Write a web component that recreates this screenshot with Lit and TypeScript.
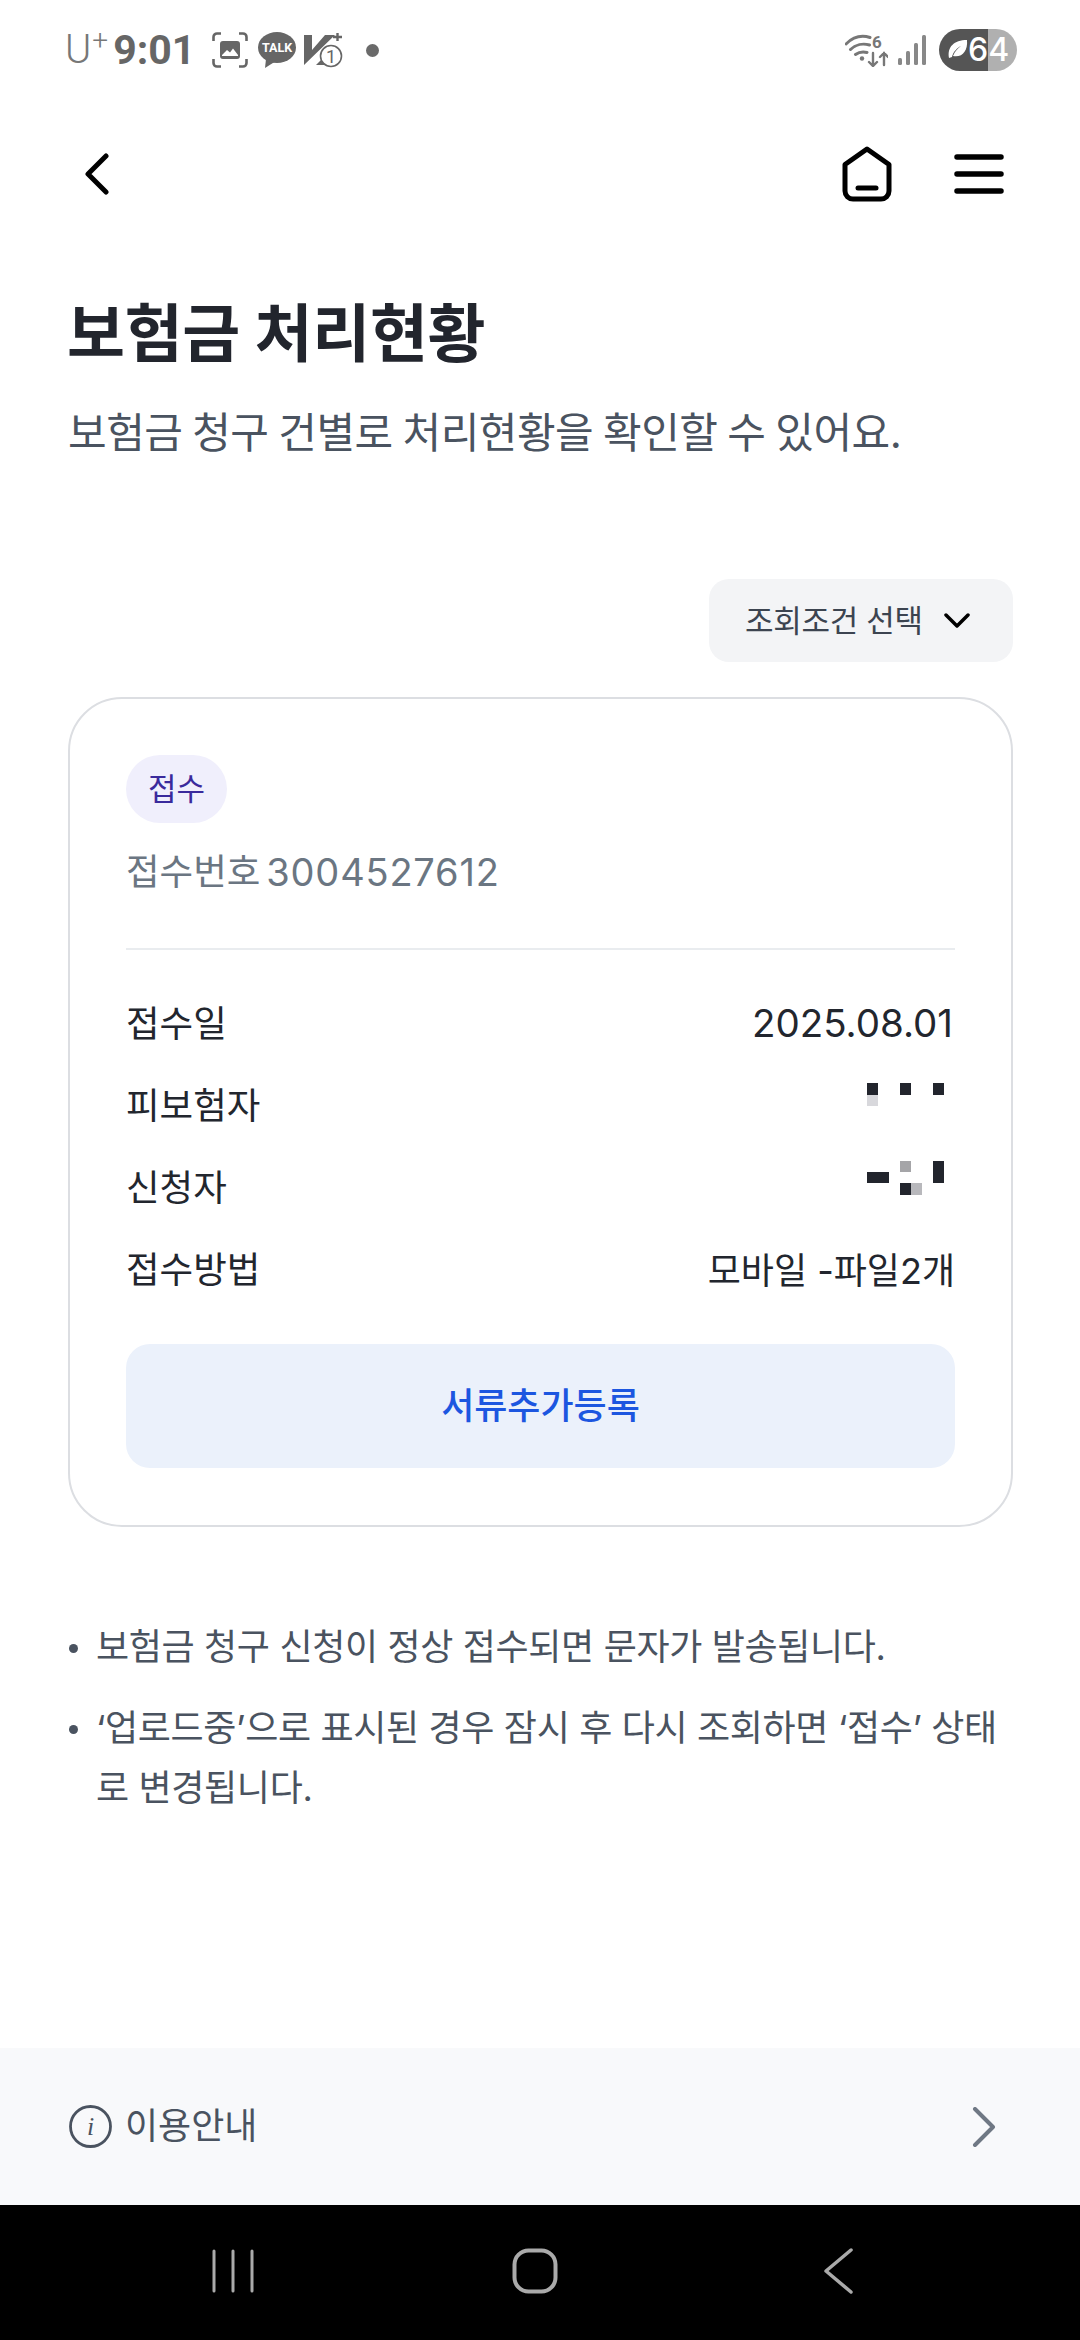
import { LitElement, html, css, svg } from "lit";
import { customElement } from "lit/decorators.js";

// mosaic blocks that hide personal names
const maskInsured = svg`
    <rect x="0" y="19" width="11" height="12" fill="#22252d" />
    <rect x="0" y="31" width="11" height="11" fill="#d8d8dc" />
    <rect x="33" y="19" width="11" height="12" fill="#22252d" />
    <rect x="66" y="19" width="11" height="12" fill="#22252d" />
`;
const maskApplicant = svg`
    <rect x="0" y="26" width="22" height="11" fill="#22252d" />
    <rect x="33" y="15" width="11" height="11" fill="#a5a5a8" />
    <rect x="33" y="37" width="11" height="12" fill="#22252d" />
    <rect x="44" y="37" width="11" height="12" fill="#b8b8bc" />
    <rect x="66" y="15" width="11" height="22" fill="#22252d" />
`;

@customElement("app-root")
export class AppRoot extends LitElement {
    static override styles = css`
        :host {
            display: flex;
            flex-direction: column;
            width: 1080px;
            height: 2340px;
            background: #fff;
            font-family: Inter, "Noto Sans CJK KR", sans-serif;
            color: #22252d;
            overflow: hidden;
        }

        svg {
            display: block;
            flex: none;
        }

        .status {
            height: 100px;
            flex: none;
            display: flex;
            align-items: center;
            justify-content: space-between;
            padding: 0 63px 0 65px;
            color: #666;
            font-family: Roboto, sans-serif;
        }
        .status-left,
        .status-right {
            display: flex;
            align-items: center;
        }
        .carrier {
            font-size: 40px;
            font-weight: 300;
            line-height: 40px;
            color: #777;
        }
        .carrier sup {
            font-size: 28px;
            line-height: 0;
            vertical-align: 13px;
            margin-left: 1px;
        }
        .time {
            font-size: 41px;
            font-weight: 700;
            line-height: 44px;
            margin: 0 17px 0 5px;
            color: #666;
        }
        .talk {
            margin-left: 10px;
        }
        .vee {
            margin-left: 8px;
        }
        .dot {
            width: 13px;
            height: 13px;
            border-radius: 50%;
            background: #6a6a6a;
            margin-left: 23px;
        }
        .wifi {
            margin-bottom: 2px;
        }
        .signal {
            margin-left: 10px;
        }

        .battery {
            width: 78px;
            height: 42px;
            border-radius: 21px;
            margin-left: 13px;
            overflow: hidden;
            display: flex;
            align-items: center;
            background: linear-gradient(90deg, #555 0, #555 49px, #b0b0b0 49px);
            color: #fff;
            font-size: 32px;
            font-weight: 500;
            line-height: 42px;
            padding-left: 7px;
            box-sizing: border-box;
            font-family: Inter, sans-serif;
        }

        .header {
            height: 148px;
            flex: none;
            display: flex;
            align-items: center;
            padding: 0 76px 0 85px;
        }
        .header .home {
            margin-left: auto;
            margin-right: 62px;
        }

        h1 {
            margin: 45px 0 0 67px;
            font-size: 63px;
            line-height: 80px;
            font-weight: 700;
            letter-spacing: -0.3px;
            color: #22252d;
        }
        .sub {
            margin: 30px 0 0 68px;
            font-size: 42px;
            line-height: 60px;
            color: #4a5360;
            letter-spacing: -0.5px;
            word-spacing: -1.5px;
            white-space: nowrap;
        }

        .filter-row {
            display: flex;
            justify-content: flex-end;
            margin: 116px 67px 0 0;
        }
        .filter {
            width: 304px;
            height: 83px;
            box-sizing: border-box;
            border-radius: 20px;
            background: #f3f4f6;
            display: flex;
            align-items: center;
            padding-left: 36px;
            gap: 21px;
            font-size: 31px;
            letter-spacing: -0.3px;
            color: #3c4450;
        }
        .filter span {
            padding-bottom: 5px;
        }

        .card {
            margin: 35px 67px 0 68px;
            box-sizing: border-box;
            height: 830px;
            border: 2px solid #dcdee2;
            border-radius: 54px;
            padding: 56px;
        }
        .chip {
            display: inline-flex;
            align-items: center;
            justify-content: center;
            box-sizing: border-box;
            width: 101px;
            height: 68px;
            padding-bottom: 6px;
            border-radius: 34px;
            background: #f0effc;
            color: #3a2a9c;
            font-size: 31px;
        }
        .number {
            margin-top: 19px;
            display: flex;
            align-items: center;
            font-size: 38px;
            line-height: 60px;
            color: #6b7682;
        }
        .number .no-label {
            font-size: 36.5px;
            margin-right: 6px;
        }
        .number .no-value {
            letter-spacing: 0.8px;
        }
        .divider {
            margin-top: 46px;
            height: 2px;
            background: #e9ecef;
        }
        .rows {
            margin-top: 32px;
        }
        .row {
            height: 82px;
            display: flex;
            align-items: center;
            justify-content: space-between;
            font-size: 36.5px;
            color: #22262e;
        }
        .row .kr {
            padding-bottom: 3px;
        }
        .row .date {
            font-size: 38.5px;
            margin-right: 2px;
        }
        .row .method {
            font-size: 36px;
        }
        .action {
            margin-top: 34px;
            height: 124px;
            box-sizing: border-box;
            padding-bottom: 6px;
            border-radius: 24px;
            background: #ebf1fb;
            display: flex;
            align-items: center;
            justify-content: center;
            font-size: 36px;
            font-weight: 500;
            color: #1c56e0;
        }

        .notes {
            margin: 90px 0 0 67px;
            padding: 0;
            list-style: none;
            font-size: 36px;
            line-height: 60px;
            letter-spacing: -0.35px;
            color: #4a5360;
        }
        .notes li {
            position: relative;
            padding-left: 29px;
            margin-bottom: 21px;
            white-space: nowrap;
        }
        .notes li::before {
            content: "";
            position: absolute;
            left: 2px;
            top: 27px;
            width: 9px;
            height: 9px;
            border-radius: 50%;
            background: #4a5360;
        }

        .spacer {
            flex: 1;
        }

        .footer {
            height: 157px;
            flex: none;
            background: #f8f9fb;
            display: flex;
            align-items: center;
            padding: 0 84px 0 69px;
            font-size: 36px;
            color: #4a5360;
        }
        .footer .label {
            margin-left: 13px;
            padding-bottom: 8px;
        }
        .footer .go {
            margin-left: auto;
        }

        .nav {
            height: 135px;
            flex: none;
            box-sizing: border-box;
            padding: 0 0 4px 211px;
            background: #000;
            display: flex;
            align-items: center;
        }
        .nav .square {
            margin-left: 255px;
        }
        .nav .prev {
            margin-left: 265px;
        }
    `;

    private renderStatus() {
        return html`
            <div class="status">
                <div class="status-left">
                    <span class="carrier">U<sup>+</sup></span>
                    <span class="time">9:01</span>
                    <svg width="36" height="36" viewBox="0 0 36 36" fill="none" stroke="#666" stroke-width="2.600">
                        <path d="M1.500 9V5a3.500 3.500 0 0 1 3.500-3.500h4M27 1.500h4A3.500 3.500 0 0 1 34.500 5v4M34.500 27v4a3.500 3.500 0 0 1-3.500 3.500h-4M9 34.500H5A3.500 3.500 0 0 1 1.500 31v-4" />
                        <rect x="8" y="9" width="20" height="18" rx="3" fill="#666" stroke="none" />
                        <path d="M10 23l5-5 3 2.500 3-4 5 6.500v1H10z" fill="#fff" stroke="none" />
                    </svg>
                    <svg class="talk" width="38" height="36" viewBox="0 0 38 36">
                        <ellipse cx="19" cy="15.500" rx="19" ry="15.500" fill="#666" />
                        <path d="M8 27l-1 9 11-7z" fill="#666" />
                        <text x="19" y="20" text-anchor="middle" font-family="Roboto, sans-serif" font-size="12.500" font-weight="700" fill="#fff">TALK</text>
                    </svg>
                    <svg class="vee" width="39" height="36" viewBox="0 0 39 36">
                        <path d="M0 3h8v15L21 3h10L0 33z" fill="#666" />
                        <path d="M12 33l9-9 4 2-2 7z" fill="#666" />
                        <path d="M29 5h9M33.500 1v8" stroke="#666" stroke-width="2.400" />
                        <circle cx="27" cy="24" r="10.500" fill="#fff" stroke="#666" stroke-width="1.600" />
                        <text x="27" y="31" text-anchor="middle" font-family="Roboto, sans-serif" font-size="18" fill="#666">1</text>
                    </svg>
                    <span class="dot"></span>
                </div>
                <div class="status-right">
                    <svg class="wifi" width="43" height="36" viewBox="0 -4 43 36" fill="none" stroke="#777" stroke-width="3" stroke-linecap="round">
                        <path d="M1 9C8 2 17 0 25 2.500M5.500 14.500C10.500 9.500 18 8 24.500 10M10.500 19.500C14 17 18 16.500 22 17.500" />
                        <circle cx="17" cy="23.500" r="2.200" fill="#777" stroke="none" />
                        <text x="27" y="13" font-family="Roboto, sans-serif" font-size="17" font-weight="700" fill="#777" stroke="none">6</text>
                        <path d="M28 18v13M24 27l4 4 4-4M39 30V18M35 22l4-4 4 4" stroke-width="2.400" />
                    </svg>
                    <svg class="signal" width="28" height="30" viewBox="0 0 28 30" fill="#888">
                        <rect x="0" y="23" width="4" height="7" rx="1.500" />
                        <rect x="8" y="16" width="4" height="14" rx="1.500" />
                        <rect x="16" y="8" width="4" height="22" rx="1.500" />
                        <rect x="24" y="0" width="4" height="30" rx="1.500" />
                    </svg>
                    <div class="battery">
                        <svg width="22" height="26" viewBox="0 0 22 26">
                            <path d="M3 21C1 10 8 3 21 3c1 11-5 18-14 16 2-5 5-8 8-10-4 2-8 6-9 11z" fill="#fff" />
                        </svg>
                        <span>64</span>
                    </div>
                </div>
            </div>
        `;
    }

    private renderHeader() {
        return html`
            <div class="header">
                <svg width="24" height="42" viewBox="0 0 24 42" fill="none" stroke="#000" stroke-width="5" stroke-linecap="round" stroke-linejoin="round">
                    <path d="M21 3L3 21l18 18" />
                </svg>
                <svg class="home" width="50" height="56" viewBox="0 0 50 56" fill="none" stroke="#000" stroke-width="5" stroke-linejoin="round">
                    <path d="M25 3L47 18.500V45a8 8 0 0 1-8 8H11a8 8 0 0 1-8-8V18.500z" />
                    <path d="M16 42h18" stroke-linecap="round" />
                </svg>
                <svg width="50" height="40" viewBox="0 0 50 40" fill="none" stroke="#000" stroke-width="5.500" stroke-linecap="round">
                    <path d="M3 3h44M3 20h44M3 37h44" />
                </svg>
            </div>
        `;
    }

    private renderCard() {
        return html`
            <div class="card">
                <span class="chip">접수</span>
                <div class="number">
                    <span class="no-label">접수번호</span>
                    <span class="no-value">3004527612</span>
                </div>
                <div class="divider"></div>
                <div class="rows">
                    <div class="row"><span class="kr">접수일</span><span class="date">2025.08.01</span></div>
                    <div class="row">
                        <span class="kr">피보험자</span>
                        <svg width="88" height="82" viewBox="0 0 88 82">${maskInsured}</svg>
                    </div>
                    <div class="row">
                        <span class="kr">신청자</span>
                        <svg width="88" height="82" viewBox="0 0 88 82">${maskApplicant}</svg>
                    </div>
                    <div class="row"><span class="kr">접수방법</span><span class="kr method">모바일 -파일2개</span></div>
                </div>
                <div class="action">서류추가등록</div>
            </div>
        `;
    }

    override render() {
        return html`
            ${this.renderStatus()}
            ${this.renderHeader()}
            <h1>보험금 처리현황</h1>
            <div class="sub">보험금 청구 건별로 처리현황을 확인할 수 있어요.</div>
            <div class="filter-row">
                <div class="filter">
                    <span>조회조건 선택</span>
                    <svg width="26" height="16" viewBox="0 0 26 16" fill="none" stroke="#000" stroke-width="3.500" stroke-linecap="round" stroke-linejoin="round">
                        <path d="M2 2l11 11L24 2" />
                    </svg>
                </div>
            </div>
            ${this.renderCard()}
            <ul class="notes">
                <li>보험금 청구 신청이 정상 접수되면 문자가 발송됩니다.</li>
                <li>‘업로드중’으로 표시된 경우 잠시 후 다시 조회하면 ‘접수’ 상태<br />로 변경됩니다.</li>
            </ul>
            <div class="spacer"></div>
            <div class="footer">
                <svg width="43" height="43" viewBox="0 0 43 43" fill="none">
                    <circle cx="21.500" cy="21.500" r="20" stroke="#4a5360" stroke-width="2.800" />
                    <text x="21.500" y="30" text-anchor="middle" font-family="Liberation Serif, serif" font-style="italic" font-size="26" fill="#4a5360">i</text>
                </svg>
                <span class="label">이용안내</span>
                <svg class="go" width="24" height="40" viewBox="0 0 24 40" fill="none" stroke="#6f7884" stroke-width="4" stroke-linecap="round" stroke-linejoin="round">
                    <path d="M3 2l18 18L3 38" />
                </svg>
            </div>
            <div class="nav">
                <svg width="46" height="44" viewBox="0 0 46 44" fill="none" stroke="#aaa" stroke-width="3" stroke-linecap="round">
                    <path d="M3 2v40M22 2v40M41 2v40" />
                </svg>
                <svg class="square" width="46" height="46" viewBox="0 0 46 46" fill="none" stroke="#aaa" stroke-width="4">
                    <rect x="2.500" y="2.500" width="41" height="41" rx="14" />
                </svg>
                <svg class="prev" width="30" height="46" viewBox="0 0 30 46" fill="none" stroke="#aaa" stroke-width="3.500" stroke-linecap="round" stroke-linejoin="round">
                    <path d="M28 2L3 23l25 21" />
                </svg>
            </div>
        `;
    }
}
